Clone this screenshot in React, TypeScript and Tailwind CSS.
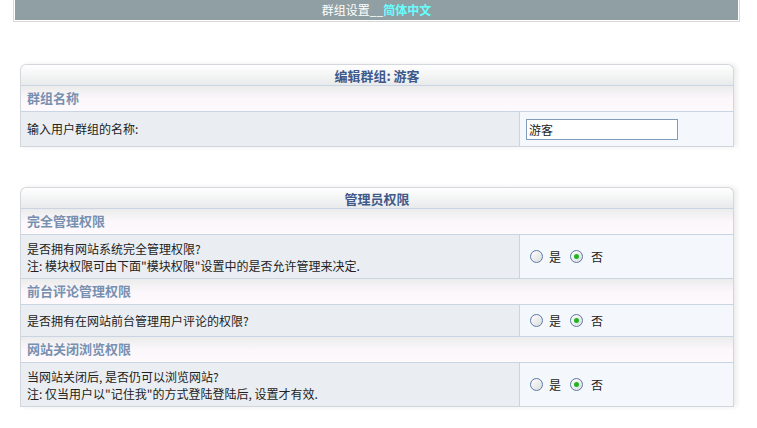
import type { ReactNode } from 'react';

const font = { fontFamily: '"SimSun", "Noto Sans CJK SC", sans-serif' };

// 分组标题行
const SectionRow = ({ title }: { title: string }) => (
  <div className="h-[26px] border-t border-[#c9d5e2] bg-gradient-to-b from-[#ececec] via-[#fbf7fb] to-[#fdf9fd] pl-[6px] text-[13px] font-bold leading-[23px] text-[#7890b0]">
    {title}
  </div>
);

const Row = ({ left, right, tall }: { left: ReactNode; right: ReactNode; tall?: boolean }) => (
  <div className={`flex border-t border-[#c9d5e2] ${tall ? 'h-[44px]' : 'h-[32px]'}`}>
    <div className="flex w-[498px] items-center bg-[#eaeef3] pl-[6px] text-[12px] leading-[17px] text-[#222]">
      <div>{left}</div>
    </div>
    <div className="flex flex-1 items-center border-l border-[#c9d5e2] bg-[#f4f8fc] pl-[6px]">{right}</div>
  </div>
);

const Radio = ({ checked }: { checked?: boolean }) => (
  <span className="flex h-[13px] w-[13px] items-center justify-center rounded-full border border-[#5a7aa8] bg-gradient-to-br from-white to-[#dcdcdc]">
    {checked && <span className="h-[5px] w-[5px] rounded-full bg-[#22b322]" />}
  </span>
);

const YesNo = () => (
  <div className="flex items-center pl-[4px] text-[12px] text-[#222]">
    <Radio />
    <span className="ml-[6px]">是</span>
    <span className="ml-[9px]"><Radio checked /></span>
    <span className="ml-[8px]">否</span>
  </div>
);

// 带圆角标题的面板
const Panel = ({ title, children }: { title: string; children: ReactNode }) => (
  <div className="ml-[20px] w-[714px] rounded-t-[6px] shadow-[3px_0_5px_rgba(0,0,0,0.08)]">
    <div className="h-[21px] rounded-t-[6px] border border-b-0 border-[#d4d8dc] bg-gradient-to-b from-white to-[#e9eaeb] text-center text-[13px] font-bold leading-[21px] text-[#3f5a8a]">
      {title}
    </div>
    <div className="border-x border-b border-[#d0d6dc]">{children}</div>
  </div>
);

export default function App() {
  return (
    <div className="min-h-[428px] w-[757px] bg-white" style={font}>
      {/* 顶部标题栏 */}
      <div className="ml-[13px] w-[727px] border-x border-b border-[#d8d8d8] px-[1px] pb-[1px]">
        <div className="h-[20px] bg-[#8f9fa4] text-center text-[12px] leading-[20px] text-white">
          群组设置__<span className="font-bold text-[#66ffff]">简体中文</span>
        </div>
      </div>

      <div className="mt-[42px]">
        <Panel title="编辑群组: 游客">
          <SectionRow title="群组名称" />
          <div className="flex h-[35px] border-t border-[#c9d5e2]">
            <div className="flex w-[498px] items-center bg-[#eaeef3] pl-[6px] text-[12px] text-[#222]">输入用户群组的名称:</div>
            <div className="flex flex-1 items-center border-l border-[#c9d5e2] bg-[#f4f8fc] pl-[6px]">
              <input
                defaultValue="游客"
                className="h-[21px] w-[152px] border border-[#7f9db9] bg-white px-[2px] text-[12px] text-[#222] outline-none"
                style={font}
              />
            </div>
          </div>
        </Panel>
      </div>

      <div className="mt-[40px]">
        <Panel title="管理员权限">
          <SectionRow title="完全管理权限" />
          <Row
            tall
            left={<>是否拥有网站系统完全管理权限?<br />注: 模块权限可由下面"模块权限"设置中的是否允许管理来决定.</>}
            right={<YesNo />}
          />
          <SectionRow title="前台评论管理权限" />
          <Row left="是否拥有在网站前台管理用户评论的权限?" right={<YesNo />} />
          <SectionRow title="网站关闭浏览权限" />
          <Row
            tall
            left={<>当网站关闭后, 是否仍可以浏览网站?<br />注: 仅当用户以"记住我"的方式登陆登陆后, 设置才有效.</>}
            right={<YesNo />}
          />
        </Panel>
      </div>
    </div>
  );
}
